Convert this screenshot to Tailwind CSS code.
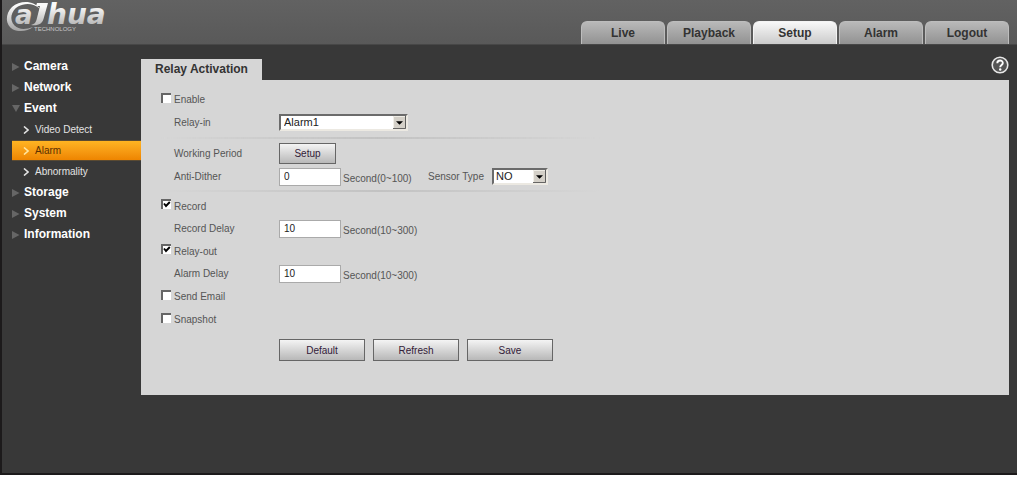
<!DOCTYPE html>
<html lang="en">
<head>
<meta charset="utf-8">
<title>Relay Activation</title>
<script src="https://cdn.jsdelivr.net/npm/@tailwindcss/browser@4"></script>
</head>
<body class="bg-white pr-[7px] font-['Liberation_Sans',Arial,sans-serif] text-[10px] text-[#555]">
<svg class="hidden">
  <symbol id="chev" viewBox="0 0 6 8"><path d="M1 .5 L5 4 L1 7.500" fill="none" stroke="currentColor" stroke-width="1.6"/></symbol>
  <symbol id="tri" viewBox="0 0 8 10"><path d="M0 1 L7.5 5 L0 9 Z" fill="#666"/></symbol>
  <symbol id="drop" viewBox="0 0 13 15"><path d="M0 0H13V15H0Z" fill="#d4d0c8"/><path d="M.5 14V.5H12" fill="none" stroke="#f3f1ec"/><path d="M0 14.5H12.5V0" fill="none" stroke="#555"/><path d="M3 6H10L6.5 10Z" fill="#000"/></symbol>
</svg>
<div class="border-b-2 border-l-2 border-[#1c1a1b] bg-[#383838] pb-[78px]">
  <header class="flex h-[45px] items-end justify-between border-b border-[#474747] bg-linear-to-b from-[#626262] to-[#595959] pr-2">
    <a href="#" aria-label="Dahua Technology" class="self-start">
      <svg class="h-9 w-28" viewBox="0 0 112 36">
        <defs><linearGradient id="lg" gradientUnits="userSpaceOnUse" x1="0" y1="2" x2="0" y2="30"><stop offset="0.15" stop-color="#fafafa"/><stop offset="1" stop-color="#a6a6a6"/></linearGradient></defs>
        <path d="M38 9 C32 0 18 0 10 7 C3 14 3 25 11 29.500 C18 32.500 26 31 31 27 C24 29.500 17 30 12.500 25.500 C7 19.500 9 11 16 6.500 C23 2.500 32 3 38 9 Z" fill="url(#lg)"/>
        <g fill="url(#lg)" font-family="DejaVu Sans" font-weight="bold" font-style="italic">
          <text x="13" y="24" font-size="26">a</text>
          <path d="M35 3 H46 L41.500 19 C40 24 36 26 29 25 C33 24 34 22 35 18 L38 6 H34 Z"/>
          <text x="45" y="24" font-size="28">hua</text>
        </g>
        <text x="32" y="31" font-family="Liberation Sans" font-size="6" fill="#c8c8c8">TECHNOLOGY</text>
      </svg>
    </a>
    <nav class="flex gap-[2px] text-center text-xs leading-[22px] font-bold text-[#333]">
      <a href="#" class="h-[23px] w-[84px] rounded-t-md border border-b-0 border-[#bdbdbd] bg-linear-to-b from-[#b9b9b9] to-[#929292]">Live</a>
      <a href="#" class="h-[23px] w-[84px] rounded-t-md border border-b-0 border-[#bdbdbd] bg-linear-to-b from-[#b9b9b9] to-[#929292]">Playback</a>
      <a href="#" aria-current="page" class="h-[23px] w-[84px] rounded-t-md border border-b-0 border-[#f4f4f4] bg-linear-to-b from-[#f8f8f8] to-[#cbcbcb]">Setup</a>
      <a href="#" class="h-[23px] w-[84px] rounded-t-md border border-b-0 border-[#bdbdbd] bg-linear-to-b from-[#b9b9b9] to-[#929292]">Alarm</a>
      <a href="#" class="h-[23px] w-[84px] rounded-t-md border border-b-0 border-[#bdbdbd] bg-linear-to-b from-[#b9b9b9] to-[#929292]">Logout</a>
    </nav>
  </header>
  <div class="flex pr-2">
    <nav class="w-[139px] shrink-0 pt-[11px] pl-[10px] text-xs leading-[21px] font-bold text-white">
      <a href="#" class="flex items-center gap-1"><svg class="h-[10px] w-2"><use href="#tri"/></svg>Camera</a>
      <a href="#" class="flex items-center gap-1"><svg class="h-[10px] w-2"><use href="#tri"/></svg>Network</a>
      <a href="#" class="flex items-center gap-1"><svg class="h-2 w-2" viewBox="0 0 8 8"><path d="M0 0H8L4 7Z" fill="#666"/></svg>Event</a>
      <div class="text-[10px] font-normal text-[#e4e4e4]">
        <a href="#" class="flex h-[21px] items-center gap-[6px] pl-[11px]"><svg class="h-2 w-[6px]"><use href="#chev"/></svg>Video Detect</a>
        <a href="#" aria-current="page" class="flex h-[21px] items-center gap-[6px] border-y border-[#5a4a32] bg-linear-to-b from-[#ffb422] to-[#ee8500] pl-[11px] text-[#5c3000]"><svg class="h-2 w-[6px] text-[#ffe6a0]"><use href="#chev"/></svg>Alarm</a>
        <a href="#" class="flex h-[21px] items-center gap-[6px] pl-[11px]"><svg class="h-2 w-[6px]"><use href="#chev"/></svg>Abnormality</a>
      </div>
      <a href="#" class="flex items-center gap-1"><svg class="h-[10px] w-2"><use href="#tri"/></svg>Storage</a>
      <a href="#" class="flex items-center gap-1"><svg class="h-[10px] w-2"><use href="#tri"/></svg>System</a>
      <a href="#" class="flex items-center gap-1"><svg class="h-[10px] w-2"><use href="#tri"/></svg>Information</a>
    </nav>
    <main class="min-w-0 grow">
      <div class="flex h-[35px] items-end justify-between">
        <h1 class="bg-[#d6d6d6] px-[14px] text-xs leading-[21px] font-bold text-[#333]">Relay Activation</h1>
        <button type="button" aria-label="Help" class="mb-[6px]"><svg class="h-[18px] w-[18px]" viewBox="0 0 18 18"><circle cx="9" cy="9" r="7.800" fill="#555" stroke="#e8e8e8" stroke-width="1.600"/><path d="M6.300 7.200 C6.300 3.600 11.900 3.700 11.800 7 C11.800 9 9.200 9 9.200 11.300" fill="none" stroke="#fff" stroke-width="1.900"/><circle cx="9.200" cy="13.500" r="1.200" fill="#fff"/></svg></button>
      </div>
      <form class="bg-[#d6d6d6] pt-2 pb-[34px] pl-5">
        <div class="flex h-[23px] items-center gap-[3px]"><input id="en" type="checkbox" class="mb-1 h-[10px] w-[10px] appearance-none border-t-2 border-l-2 border-[#666] bg-white"><label for="en">Enable</label></div>
        <div class="flex h-[23px] items-center pl-[13px]">
          <label for="ri" class="w-[105px]">Relay-in</label>
          <div class="relative h-[17px] w-[129px] border-2 border-r-[#ece9e2] border-b-[#ece9e2] border-t-[#6b6b6b] border-l-[#6b6b6b] bg-white">
            <select id="ri" class="block h-full w-full appearance-none pl-[3px] text-[11px] leading-[13px] text-[#222]"><option>Alarm1</option></select>
            <svg class="pointer-events-none absolute top-0 right-0 h-[13px] w-[13px]" viewBox="0 0 13 15" preserveAspectRatio="none"><use href="#drop" width="13" height="15"/></svg>
          </div>
        </div>
        <div class="my-[3px] h-[2px] w-[440px] border-b border-transparent bg-linear-to-r from-transparent via-[#c2c2c2] to-transparent"></div>
        <div class="flex h-[23px] items-center pl-[13px]">
          <span class="w-[105px]">Working Period</span>
          <button type="button" class="h-[21px] w-[57px] border border-[#666] bg-linear-to-b from-[#f4f4f4] to-[#b8b8b8] text-[#322038]">Setup</button>
        </div>
        <div class="flex h-[23px] items-center pl-[13px]">
          <label for="ad" class="w-[105px]">Anti-Dither</label>
          <input id="ad" value="0" class="h-[18px] w-[62px] border border-[#aaa] bg-white pl-1 text-[#222]">
          <span class="w-[87px] pt-[3px] pl-[2px]">Second(0~100)</span>
          <label for="st" class="w-[64px]">Sensor Type</label>
          <div class="relative h-[17px] w-[56px] border-2 border-r-[#ece9e2] border-b-[#ece9e2] border-t-[#6b6b6b] border-l-[#6b6b6b] bg-white">
            <select id="st" class="block h-full w-full appearance-none pl-[2px] text-[11px] leading-[13px] text-[#222]"><option>NO</option></select>
            <svg class="pointer-events-none absolute top-0 right-0 h-[13px] w-[13px]" viewBox="0 0 13 15" preserveAspectRatio="none"><use href="#drop" width="13" height="15"/></svg>
          </div>
        </div>
        <div class="mt-[2px] mb-[3px] h-[2px] w-[440px] bg-linear-to-r from-transparent via-[#c2c2c2] to-transparent"></div>
        <div class="flex h-[22px] items-center gap-[3px]"><span class="relative mb-1 flex"><input id="rec" type="checkbox" checked class="h-[10px] w-[10px] appearance-none border-t-2 border-l-2 border-[#666] bg-white"><svg class="pointer-events-none absolute top-0 left-0 h-[10px] w-[10px]" viewBox="0 0 10 10"><path d="M3 4.500 L5 7 L8.800 3" fill="none" stroke="#000" stroke-width="1.900"/></svg></span><label for="rec">Record</label></div>
        <div class="flex h-[23px] items-center pl-[13px]">
          <label for="rd" class="w-[105px]">Record Delay</label>
          <input id="rd" value="10" class="h-[18px] w-[62px] border border-[#aaa] bg-white pl-1 text-[#222]">
          <span class="pt-[3px] pl-[2px]">Second(10~300)</span>
        </div>
        <div class="flex h-[22px] items-center gap-[3px]"><span class="relative mb-1 flex"><input id="ro" type="checkbox" checked class="h-[10px] w-[10px] appearance-none border-t-2 border-l-2 border-[#666] bg-white"><svg class="pointer-events-none absolute top-0 left-0 h-[10px] w-[10px]" viewBox="0 0 10 10"><path d="M3 4.500 L5 7 L8.800 3" fill="none" stroke="#000" stroke-width="1.900"/></svg></span><label for="ro">Relay-out</label></div>
        <div class="flex h-[23px] items-center pl-[13px]">
          <label for="al" class="w-[105px]">Alarm Delay</label>
          <input id="al" value="10" class="h-[18px] w-[62px] border border-[#aaa] bg-white pl-1 text-[#222]">
          <span class="pt-[3px] pl-[2px]">Second(10~300)</span>
        </div>
        <div class="flex h-[23px] items-center gap-[3px]"><input id="em" type="checkbox" class="mb-1 h-[10px] w-[10px] appearance-none border-t-2 border-l-2 border-[#666] bg-white"><label for="em">Send Email</label></div>
        <div class="flex h-[23px] items-center gap-[3px]"><input id="sn" type="checkbox" class="mb-1 h-[10px] w-[10px] appearance-none border-t-2 border-l-2 border-[#666] bg-white"><label for="sn">Snapshot</label></div>
        <div class="mt-2 flex gap-2 pl-[118px] text-[#322038]">
          <button type="button" class="h-[22px] w-[86px] border border-[#666] bg-linear-to-b from-[#f4f4f4] to-[#b8b8b8]">Default</button>
          <button type="button" class="h-[22px] w-[86px] border border-[#666] bg-linear-to-b from-[#f4f4f4] to-[#b8b8b8]">Refresh</button>
          <button type="button" class="h-[22px] w-[86px] border border-[#666] bg-linear-to-b from-[#f4f4f4] to-[#b8b8b8]">Save</button>
        </div>
      </form>
    </main>
  </div>
</div>
</body>
</html>
